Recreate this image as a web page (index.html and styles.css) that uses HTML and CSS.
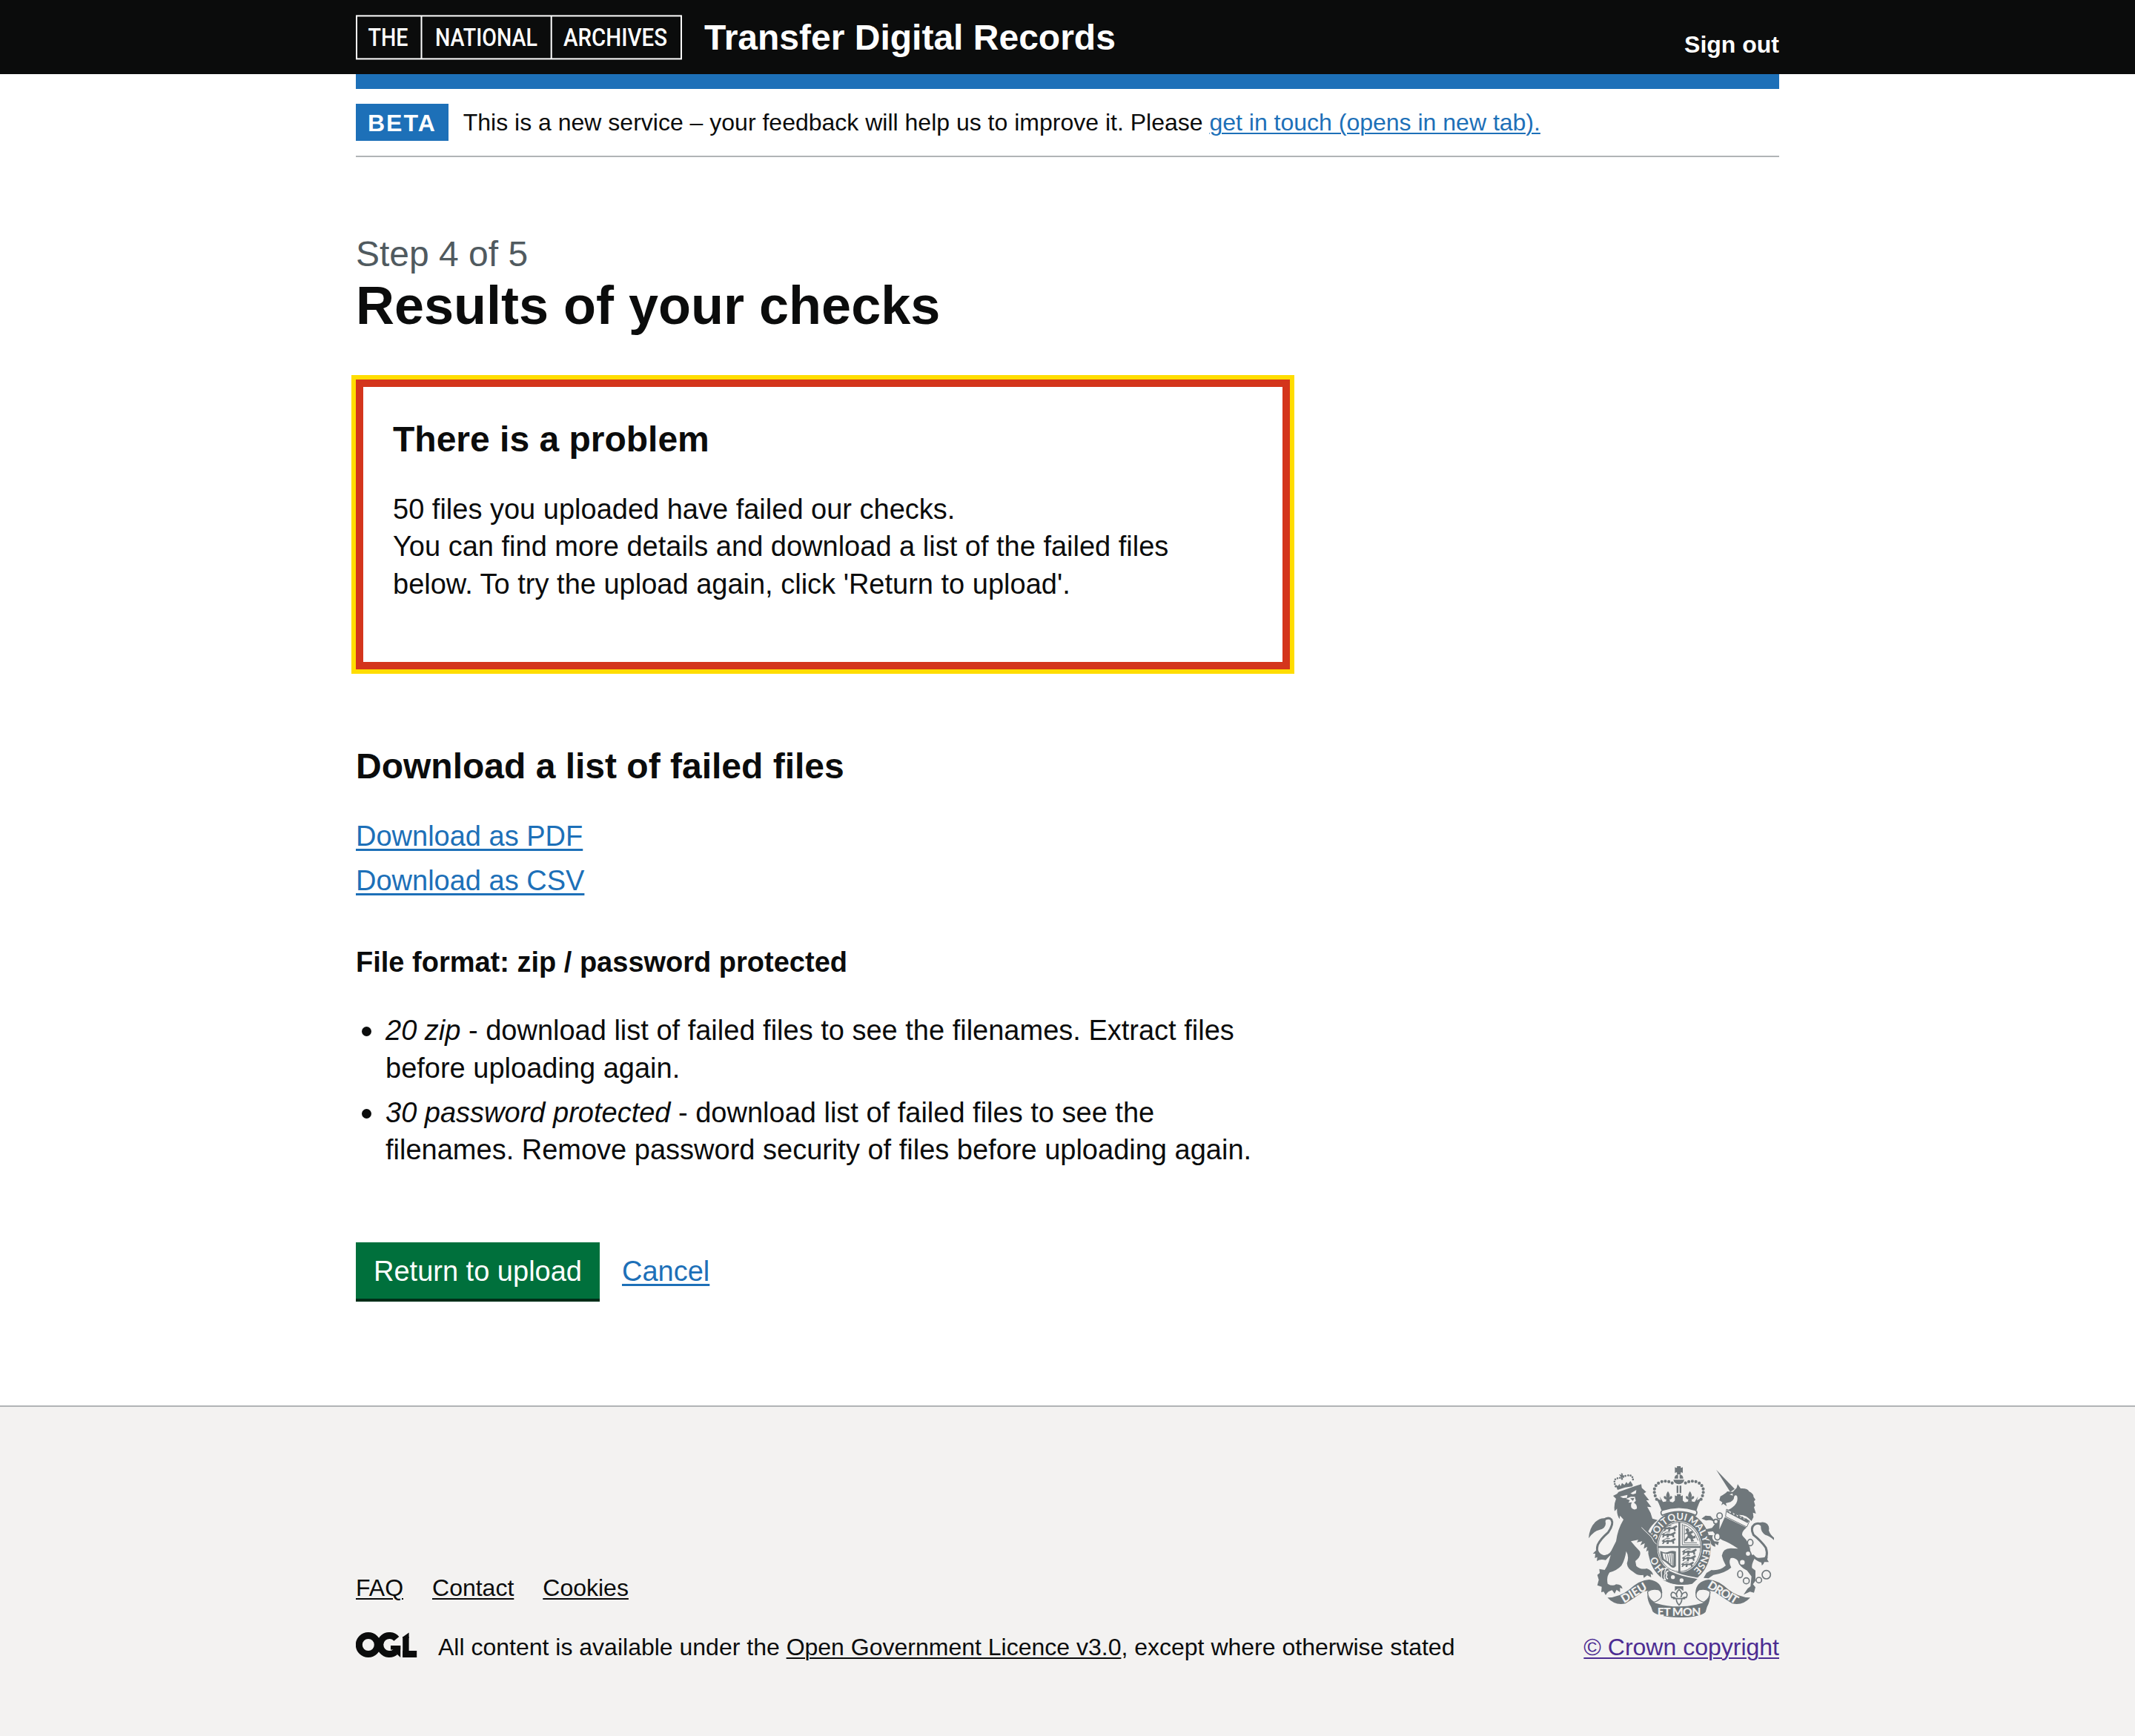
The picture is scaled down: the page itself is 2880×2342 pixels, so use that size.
FILE: index.html
```html
<!DOCTYPE html>
<html lang="en">
<head>
<meta charset="utf-8">
<title>Results of your checks - Transfer Digital Records</title>
<link rel="stylesheet" href="styles.css">
</head>
<body>
<header class="header">
  <div class="container header-row">
    <a class="brand" href="#">
      <svg class="tna-logo" width="440" height="61" viewBox="0 0 440 61" aria-label="The National Archives">
        <g fill="none" stroke="#fff" stroke-width="2">
          <rect x="1" y="1.4" width="438" height="58"/>
          <path d="M88.5 1V60M263.7 1V60"/>
        </g>
        <g class="tna-words">
          <text x="16.5" y="42.3" textLength="54" lengthAdjust="spacingAndGlyphs">THE</text>
          <text x="107" y="42.3" textLength="138" lengthAdjust="spacingAndGlyphs">NATIONAL</text>
          <text x="280" y="42.3" textLength="140" lengthAdjust="spacingAndGlyphs">ARCHIVES</text>
        </g>
      </svg>
      <span class="service-name">Transfer Digital Records</span>
    </a>
    <a class="sign-out" href="#">Sign out</a>
  </div>
</header>

<div class="container">
  <div class="phase-banner">
    <strong class="tag">BETA</strong>
    <span>This is a new service – your feedback will help us to improve it. Please <a class="link" href="#">get in touch (opens in new tab).</a></span>
  </div>

  <main class="main">
    <span class="caption">Step 4 of 5</span>
    <h1 class="heading-l">Results of your checks</h1>

    <section class="error-summary">
      <h2 class="heading-m">There is a problem</h2>
      <p class="body">50 files you uploaded have failed our checks.<br>You can find more details and download a list of the failed files below. To try the upload again, click 'Return to upload'.</p>
    </section>

    <h2 class="heading-m">Download a list of failed files</h2>
    <ul class="list downloads">
      <li><a class="link" href="#">Download as PDF</a></li>
      <li><a class="link" href="#">Download as CSV</a></li>
    </ul>

    <h3 class="heading-s">File format: zip / password protected</h3>
    <ul class="list list-bullet">
      <li><em>20 zip</em> - download list of failed files to see the filenames. Extract files before uploading again.</li>
      <li><em>30 password protected</em> - download list of failed files to see the filenames. Remove password security of files before uploading again.</li>
    </ul>

    <div class="button-group">
      <a class="button" href="#">Return to upload</a>
      <a class="link" href="#">Cancel</a>
    </div>
  </main>
</div>

<footer class="footer">
  <div class="container footer-meta">
    <div>
      <nav class="footer-links">
        <a href="#">FAQ</a>
        <a href="#">Contact</a>
        <a href="#">Cookies</a>
      </nav>
      <div class="licence">
        <svg width="83" height="40" viewBox="0 0 83 40" aria-label="OGL">
          <g fill="none" stroke="#0b0c0c" stroke-width="9">
            <circle cx="16.8" cy="17" r="12.5"/>
            <circle cx="45.3" cy="17" r="12.5" stroke-dasharray="58.5 20.1" transform="rotate(50 45.3 17)"/>
          </g>
          <g fill="#0b0c0c">
            <rect x="47" y="18" width="13.2" height="5.5"/>
            <polygon points="52,20 60.2,18 60.2,34 55,29 50,24"/>
            <rect x="63.2" y="6" width="8.4" height="28"/>
            <polygon points="63.2,6.5 71.6,.6 71.6,8 63.2,8"/>
            <rect x="63.2" y="25" width="19" height="9"/>
          </g>
        </svg>
        <span>All content is available under the <a href="#">Open Government Licence v3.0</a>, except where otherwise stated</span>
      </div>
    </div>
    <a class="copyright" href="#">
      <svg class="crest" width="250" height="204" viewBox="129 84 750 612" aria-hidden="true">
        <defs>
          <path id="garter-line" d="M496 525A97 112 0 0 1 496 301A97 112 0 0 1 496 525"/>
          <g id="pattee"><path d="M-16-12Q-5-4-8-17H8Q5-4 16-12V12Q5 4 8 17H-8Q-5 4-16 12Z"/></g>
          <g id="lily"><path d="M0-22Q12-6 4 6Q10-6 17 0Q18 10 6 12L9 20H-9L-6 12Q-18 10-17 0Q-10-6-4 6Q-12-6 0-22Z"/></g>
          <g id="passant"><path d="M0 8L8 2L14 7L24 3L36 5L46 0L54-4L58 2L50 8L52 18L46 20L43 12L30 12L28 20L20 20L22 12L12 13L8 20L2 19L6 12Z"/><path d="M8 4Q20-6 34-2" fill="none" stroke="#6f777b" stroke-width="3"/></g>
        </defs>
        <g fill="#6f777b">
          <!-- royal crown -->
          <use href="#pattee" transform="translate(494 100)"/>
          <path d="M476 134A18 18 0 0 1 491 117V134ZM497 117A18 18 0 0 1 512 134H497ZM472 139H516Q513 156 494 157Q475 156 472 139Z"/>
          <path d="M485 163H492V193H485ZM497 163H504V193H497Z"/>
          <g fill="none" stroke="#6f777b" stroke-width="12.5" stroke-linecap="round" stroke-dasharray="0 14.5">
            <path d="M404 218Q380 168 418 149Q445 138 472 155"/>
            <path d="M584 218Q608 168 570 149Q543 138 516 155"/>
          </g>
          <use href="#pattee" transform="translate(494 214)"/>
          <use href="#lily" transform="translate(450 207)"/>
          <use href="#lily" transform="translate(539 207)"/>
          <path d="M401 212L421 222L416 206L430 229L450 226L470 230L482 220L494 229L506 220L518 230L539 226L558 229L572 206L567 222L587 212Q572 238 566 262Q494 242 423 262Q416 238 401 212Z"/>

          <!-- garter and shield -->
          <ellipse cx="496" cy="414" rx="127" ry="149"/>
          <path d="M427 262Q494 240 562 262Q572 270 562 283Q494 253 427 283Q416 272 427 262Z" fill="#f3f2f1" stroke="#6f777b" stroke-width="5"/>
          <ellipse cx="496" cy="411" rx="90" ry="104" fill="#f3f2f1"/>
          <ellipse cx="496" cy="411" rx="86" ry="100" fill="none" stroke="#6f777b" stroke-width="3"/>
          <path d="M410 407H582V415H410ZM492 310H500V513H492Z"/>
          <path d="M508 318V402H574M516 325V394H567M511 322Q552 330 572 385" fill="none" stroke="#6f777b" stroke-width="3"/>
          <use href="#passant" transform="translate(430 327)"/>
          <use href="#passant" transform="translate(424 353)"/>
          <use href="#passant" transform="translate(424 379)"/>
          <use href="#passant" transform="translate(506 422) scale(1.05)"/>
          <use href="#passant" transform="translate(506 448)"/>
          <use href="#passant" transform="translate(503 474) scale(.9)"/>
          <path d="M520 340L530 334L536 342L534 350L548 345L552 353L543 358L552 368L560 364L562 374L550 378L556 388L544 390L541 378L532 374L526 386L516 388L522 376L530 366L528 358L514 360L526 351Z"/>
          <path d="M419 427Q434 436 448 432Q462 424 482 429V488Q474 500 462 491Q440 470 427 464Q418 448 419 427ZM428 436Q430 452 434 460Q450 468 464 484L472 486V438Q460 434 448 440Z" fill-rule="evenodd"/>
          <path d="M439 441L443 464M449 443L453 472M458 440L462 480M466 438L469 484" fill="none" stroke="#6f777b" stroke-width="3"/>
          <path d="M482 520L495 510L522 522L494 524Z"/>
          <g class="motto">
            <text><textPath href="#garter-line" startOffset="15%">HO</textPath></text>
            <text><textPath href="#garter-line" startOffset="36.5%">SOIT</textPath></text>
            <text><textPath href="#garter-line" startOffset="48.8%">QUI</textPath></text>
            <text><textPath href="#garter-line" startOffset="61.5%">MAL</textPath></text>
            <text><textPath href="#garter-line" startOffset="70%">Y</textPath></text>
            <text><textPath href="#garter-line" startOffset="81.5%">PENSE</textPath></text>
          </g>
          <!-- strap and buckle -->
          <path d="M438 500Q500 540 574 536L548 560Q490 572 430 545Z"/>
          <path d="M455 505Q506 530 575 538" fill="none" stroke="#f3f2f1" stroke-width="5"/>
          <path d="M445 496Q418 500 424 524Q422 545 440 545Q430 530 438 520Q434 508 445 496Z" stroke="#f3f2f1" stroke-width="4"/>
          <path d="M452 508Q438 510 446 524Q438 536 450 540" fill="none" stroke="#f3f2f1" stroke-width="5"/>
          <circle cx="470" cy="533" r="8" fill="#f3f2f1"/>
          <circle cx="505" cy="546" r="8" fill="#f3f2f1"/>

          <!-- lion -->
          <path d="M228 204L244 196L250 188L318 164L342 157L344 172L362 188L352 194L374 222L362 222L383 250L366 248Q382 272 387 296L408 302Q382 322 370 348Q398 368 402 400L407 430L396 424L396 442L386 428L370 440L376 420L362 430L366 410L352 418L356 396L338 404L346 388L324 392L330 382L300 388Q316 408 336 428Q344 448 318 468L322 488Q340 504 364 498Q386 506 390 524L380 520L382 534L366 526L352 536L350 524Q326 528 310 512Q286 500 284 478Q294 450 281 428Q276 462 262 486Q244 506 214 514Q200 532 206 560Q226 572 240 562Q264 562 266 580L256 576L256 594L242 584L234 600L224 586Q206 590 198 606L190 592L180 594L182 572L164 566L170 544L164 524L174 516L172 500L194 504Q212 480 222 424Q232 404 240 388Q246 340 270 300L256 284L254 298Q242 280 244 256L234 266Q230 240 240 216Z"/>
          <path d="M343 332L384 372Q392 392 404 400" fill="none" stroke="#f3f2f1" stroke-width="3"/>
          <path d="M256 207L286 200L284 212L268 213ZM298 194L322 180L320 194L308 198ZM280 216L300 208L316 208L320 224L312 232Q326 240 324 256Q312 264 302 252Q298 240 304 230L290 232L296 222Z" fill="#f3f2f1"/>
          <path d="M297 214L314 213L308 224Z"/>
          <path d="M238 405Q220 448 192 450Q154 440 166 402Q176 380 208 352Q232 318 221 300Q208 288 190 302" fill="none" stroke="#6f777b" stroke-width="9"/>
          <path d="M129 376Q132 334 156 310Q176 290 204 296Q194 300 198 316Q198 336 172 342Q150 346 129 376ZM160 424L146 438L156 438L154 456L164 452L162 468Q176 458 198 464L220 440L180 446Z"/>
          <path d="M246 180L237 158L247 164L254 156L258 166L264 152L274 160L282 148L288 156L298 144L308 160L306 166Q276 168 246 180Z"/>
          <path d="M238 166Q226 136 246 133Q256 128 264 136Q264 126 284 122Q312 116 308 148" fill="none" stroke="#6f777b" stroke-width="8" stroke-linecap="round" stroke-dasharray="0 10"/>
          <path d="M252 117L262 119L260 112L268 115L266 120L274 122L268 128L262 134L258 126Z"/>

          <!-- unicorn -->
          <path d="M645 98L720 176L702 188Z"/>
          <path d="M712 188L728 172L732 157L744 174Q772 172 778 186Q798 196 796 208L804 220L798 226L803 244L798 250L806 276L794 272L796 290L788 306Q764 276 730 282L692 262Q738 240 730 206Q724 198 718 206Q718 226 692 232L684 234L688 246L674 236L666 242L670 230L658 222L662 206Q682 196 690 186Z"/>
          <path d="M699 199L711 194L713 203Z" fill="#f3f2f1"/>
          <path d="M680 290L768 332Q744 352 752 366Q782 394 784 432L800 458Q788 480 790 496L804 506L804 548L794 562L804 574L798 596L782 592L756 604L772 580L784 570L788 530L770 506Q740 494 732 466Q720 452 704 456Q694 472 706 494Q682 516 634 524L614 538L594 536L606 516L626 504Q660 508 684 486Q672 464 668 446Q672 416 704 416L734 418Q696 392 672 384Q648 372 632 348L606 350L610 362L632 364Q624 376 638 388L656 390L652 404L640 396L642 410Q622 406 622 386Q604 376 602 340L628 334L642 316Q630 298 604 304L586 296L602 284L622 286L640 306L660 300L658 340Z"/>
          <path d="M687 258L780 306L769 330L683 288Z" fill="#f3f2f1" stroke="#6f777b" stroke-width="3"/>
          <path d="M690 260L702 274L709 266L716 281L724 274L730 288L738 281L744 294L752 287L757 300L766 295L778 306L772 314L688 270Z"/>
          <g fill="#f3f2f1" stroke="#6f777b" stroke-width="5">
            <ellipse cx="659" cy="285" rx="11" ry="12"/><circle cx="644" cy="308" r="9"/>
            <ellipse cx="650" cy="369" rx="11" ry="14"/><ellipse cx="783" cy="393" rx="11" ry="13"/>
            <circle cx="774" cy="438" r="11"/><circle cx="751" cy="473" r="12"/>
            <ellipse cx="742" cy="521" rx="10" ry="14"/><circle cx="767" cy="548" r="12"/>
            <circle cx="818" cy="545" r="11"/><circle cx="848" cy="523" r="17"/>
          </g>
          <path d="M792 444Q812 468 836 466Q858 450 846 414Q828 388 796 362Q782 334 800 320Q814 312 830 320" fill="none" stroke="#6f777b" stroke-width="9"/>
          <path d="M812 316Q838 304 852 318Q862 330 858 344Q864 362 880 374V384Q862 366 844 362Q824 350 826 326ZM788 446Q806 462 854 450L852 462L858 472L840 472Q838 480 830 486L828 474Q804 466 788 446Z"/>

          <!-- ribbon -->
          <path d="M205 616Q254 614 292 584Q336 544 374 543Q424 550 427 596Q424 620 396 632Q384 634 380 626Q392 604 414 598Q410 584 388 586Q366 588 350 592Q310 620 278 640Q236 650 205 616Z"/>
          <path d="M783 616Q734 614 696 584Q652 544 614 543Q564 550 561 596Q564 620 592 632Q604 634 608 626Q596 604 574 598Q578 584 600 586Q622 588 638 592Q678 620 710 640Q752 650 783 616Z"/>
          <path d="M368 592Q384 578 412 584Q430 596 422 616Q408 632 392 634Q366 618 368 592ZM620 592Q604 578 576 584Q558 596 566 616Q580 632 596 634Q622 618 620 592Z" fill="#f3f2f1" stroke="#6f777b" stroke-width="4"/>
          <path d="M366 604Q374 630 400 638Q494 666 588 638Q614 630 621 604Q620 634 608 654L602 674Q580 696 494 696Q408 694 388 672L382 654Q368 634 366 604Z"/>
          <path d="M478 570H512V589Q504 580 495 578Q486 580 478 589Z"/>
          <path d="M495 582Q512 600 502 614Q508 594 522 594Q532 602 524 616Q514 612 506 622Q506 636 495 646Q484 636 484 622Q476 612 466 616Q458 602 468 594Q482 594 488 614Q478 600 495 582ZM470 620H520" fill="#f3f2f1" stroke="#6f777b" stroke-width="5"/>
          <g class="scroll-words">
            <text transform="translate(320 610) rotate(-31)" textLength="112">DIEU</text>
            <text transform="translate(495 689)" textLength="176">ET MON</text>
            <text transform="translate(665 609) rotate(31)" textLength="134">DROIT</text>
          </g>
        </g>
      </svg>
      <span>© Crown copyright</span>
    </a>
  </div>
</footer>
</body>
</html>
```
FILE: styles.css
```css
* { box-sizing: border-box; }

body {
  margin: 0;
  font-family: "Liberation Sans", Arial, sans-serif;
  font-size: 38px;
  line-height: 50.33px;
  color: #0b0c0c;
  background: #fff;
}

h1, h2, h3, p, ul { margin: 0; }

.container { width: 1920px; margin: 0 auto; }

.link {
  color: #1d70b8;
  text-decoration: underline;
  text-decoration-thickness: 3px;
  text-underline-offset: 0.1em;
}

.header { height: 100px; background: #0b0c0c; }
.header-row { display: flex; justify-content: space-between; align-items: flex-start; padding-top: 20px; }
.header a { color: #fff; text-decoration: none; font-weight: 700; }
.brand { display: flex; align-items: flex-start; gap: 30px; }
.tna-logo { display: block; overflow: visible; }
.tna-words { fill: #fff; font-family: Roboto, sans-serif; font-size: 34px; font-weight: 500; }
.service-name { font-size: 48px; line-height: 62px; }
.sign-out { margin-top: 20px; font-size: 32px; line-height: 40px; }

.phase-banner {
  display: flex;
  align-items: center;
  gap: 20px;
  height: 112px;
  padding-top: 20px;
  border-top: 20px solid #1d70b8;
  border-bottom: 2px solid #b1b4b6;
  padding-bottom: 20px;
  font-size: 32px;
  line-height: 40px;
}
.phase-banner .link { text-decoration-thickness: 2px; }
.tag {
  height: 50px;
  padding: 6px 16px 4px;
  background: #1d70b8;
  color: #fff;
  letter-spacing: 2px;
}

.main { width: 1260px; padding: 100px 0 144px; }
.caption { display: block; font-size: 48px; line-height: 62px; color: #505a5f; }
.heading-l { margin: -2px 0 60px; font-size: 72px; line-height: 80px; }
.heading-m { margin-bottom: 38px; font-size: 48px; line-height: 62px; }
.heading-s { margin: 49px 0 42.5px; font-size: 38px; }

.error-summary {
  margin-bottom: 100px;
  padding: 40px 40px 80px;
  border: 10px solid #d4351c;
  outline: 6px solid #ffdd00;
}

.list { padding: 0; list-style: none; }
.list li { margin-bottom: 10px; }
.downloads li:last-child { margin-bottom: 0; }
.downloads { margin-bottom: 59px; }
.list-bullet { padding-left: 40px; }
.list-bullet li { position: relative; }
.list-bullet li::before {
  content: "";
  position: absolute;
  left: -32px;
  top: 19.5px;
  width: 13px;
  height: 13px;
  border-radius: 50%;
  background: #0b0c0c;
}

.button-group { display: flex; gap: 30px; margin-top: 99px; }
.button {
  height: 76px;
  padding: 14px 24px 0;
  background: #00703c;
  box-shadow: 0 4px 0 #002d18;
  color: #fff;
  line-height: 50px;
  text-decoration: none;
}
.button + .link { padding-top: 14px; line-height: 50px; }

.footer {
  height: 446px;
  padding: 80px 0 100px;
  border-top: 2px solid #b1b4b6;
  background: #f3f2f1;
  font-size: 32px;
  line-height: 40px;
}
.footer-meta { display: flex; justify-content: space-between; align-items: flex-end; }
.footer a { color: #0b0c0c; text-decoration-thickness: 2px; text-underline-offset: 0.1em; }
.footer-links { display: flex; gap: 39px; margin-bottom: 40px; }
.licence { display: flex; gap: 28px; }
.footer .copyright { display: flex; flex-direction: column; align-items: center; gap: 20px; color: #4c2c92; }
.crest { display: block; }
.motto { fill: #f3f2f1; font: 700 39px Lato, sans-serif; text-anchor: middle; }
.scroll-words { fill: #f3f2f1; font: 900 47px Lato, sans-serif; text-anchor: middle; }
```
